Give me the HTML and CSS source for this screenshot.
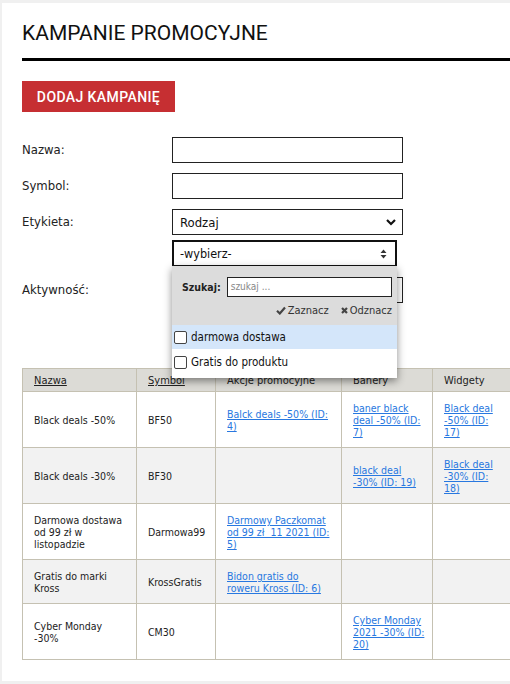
FILE: index.html
```html
<!DOCTYPE html>
<html lang="pl">
<head>
<meta charset="utf-8">
<title>Kampanie promocyjne</title>
<link rel="stylesheet" href="styles.css">
</head>
<body>
<div class="card">
  <h1 class="title">KAMPANIE PROMOCYJNE</h1>
  <div class="rule"></div>
  <button class="btn-add" type="button">DODAJ KAMPANIĘ</button>

  <form class="form">
    <div class="row">
      <label class="lbl">Nazwa:</label>
      <div class="input"></div>
    </div>
    <div class="row">
      <label class="lbl">Symbol:</label>
      <div class="input"></div>
    </div>
    <div class="row">
      <label class="lbl">Etykieta:</label>
      <div class="field-stack">
        <div class="select">
          <span>Rodzaj</span>
          <svg class="chev" width="10" height="8" viewBox="0 0 10 8"><path d="M1 2 L5 6 L9 2" fill="none" stroke="#111" stroke-width="2.2"/></svg>
        </div>
        <div class="ms-wrap">
          <div class="select select-ms">
            <span>-wybierz-</span>
            <svg class="updown" width="7" height="10" viewBox="0 0 7 10"><path d="M3.5 0.5 L6.5 4 H0.5 Z M3.5 9.5 L6.5 6 H0.5 Z" fill="#333"/></svg>
          </div>
          <div class="ms-panel">
            <div class="ms-head">
              <div class="ms-search">
                <span class="ms-slabel">Szukaj:</span>
                <div class="ms-input">szukaj ...</div>
              </div>
              <div class="ms-actions">
                <span class="ms-act"><svg width="10" height="9" viewBox="0 0 10 9"><path d="M1 4.8 L3.8 7.5 L9 1.5" fill="none" stroke="#444" stroke-width="2.2"/></svg>Zaznacz</span>
                <span class="ms-act"><svg width="7" height="7" viewBox="0 0 7 7"><path d="M1 1 L6 6 M6 1 L1 6" fill="none" stroke="#444" stroke-width="2.2"/></svg>Odznacz</span>
              </div>
            </div>
            <div class="ms-opt ms-opt-hover"><span class="cb"></span>darmowa dostawa</div>
            <div class="ms-opt ms-opt-2"><span class="cb"></span>Gratis do produktu</div>
          </div>
        </div>
      </div>
    </div>
    <div class="row row-akt">
      <label class="lbl">Aktywność:</label>
      <div class="select">
        <span></span>
        <svg class="chev" width="10" height="8" viewBox="0 0 10 8"><path d="M1 2 L5 6 L9 2" fill="none" stroke="#111" stroke-width="2.2"/></svg>
      </div>
    </div>
  </form>

  <table class="grid">
    <colgroup>
      <col class="c1"><col class="c2"><col class="c3"><col class="c4"><col class="c5">
    </colgroup>
    <thead>
      <tr>
        <th><a class="sort">Nazwa</a></th>
        <th><a class="sort">Symbol</a></th>
        <th>Akcje promocyjne</th>
        <th>Banery</th>
        <th>Widgety</th>
      </tr>
    </thead>
    <tbody>
      <tr>
        <td>Black deals -50%</td>
        <td>BF50</td>
        <td><a href="#">Balck deals -50% (ID:<br>4)</a></td>
        <td><a href="#">baner black<br>deal -50% (ID:<br>7)</a></td>
        <td><a href="#">Black deal<br>-50% (ID:<br>17)</a></td>
      </tr>
      <tr class="alt">
        <td>Black deals -30%</td>
        <td>BF30</td>
        <td></td>
        <td><a href="#">black deal<br>-30% (ID: 19)</a></td>
        <td><a href="#">Black deal<br>-30% (ID:<br>18)</a></td>
      </tr>
      <tr>
        <td>Darmowa dostawa<br>od 99 zł w<br>listopadzie</td>
        <td>Darmowa99</td>
        <td><a href="#">Darmowy Paczkomat<br>od 99 zł&nbsp; 11 2021 (ID:<br>5)</a></td>
        <td></td>
        <td></td>
      </tr>
      <tr class="alt">
        <td>Gratis do marki<br>Kross</td>
        <td>KrossGratis</td>
        <td><a href="#">Bidon gratis do<br>roweru Kross (ID: 6)</a></td>
        <td></td>
        <td></td>
      </tr>
      <tr>
        <td>Cyber Monday<br>-30%</td>
        <td>CM30</td>
        <td></td>
        <td><a href="#">Cyber Monday<br>2021 -30% (ID:<br>20)</a></td>
        <td></td>
      </tr>
    </tbody>
  </table>
</div>
</body>
</html>
```

FILE: styles.css
```css
html, body {
  margin: 0;
  padding: 0;
  background: #f0f0f0;
  overflow: hidden;
}
body {
  font-family: "DejaVu Sans Condensed", "DejaVu Sans", sans-serif;
  color: #222;
}
.card {
  background: #fff;
  margin: 3px 0 0 2px;
  width: 530px;
  height: 678px;
  padding: 0 0 0 20px;
  box-sizing: border-box;
}
.title {
  margin: 0;
  padding-top: 17px;
  font-family: Roboto, "Liberation Sans", sans-serif;
  font-weight: 400;
  font-size: 21px;
  line-height: 26px;
  color: #111;
}
.rule {
  height: 3px;
  background: #000;
  margin-top: 12px;
}
.btn-add {
  display: block;
  margin-top: 20px;
  width: 153px;
  height: 31px;
  border: 0;
  background: #c62f32;
  color: #fff;
  font-family: Roboto, "Liberation Sans", sans-serif;
  font-size: 14px;
  font-weight: 500;
  letter-spacing: 0.4px;
  padding: 0;
}
.form {
  margin-top: 25px;
  display: flex;
  flex-direction: column;
  gap: 10px;
}
.row {
  display: flex;
  align-items: flex-start;
}
.lbl {
  width: 150px;
  font-size: 13px;
  line-height: 26px;
  color: #222;
}
.input, .select {
  width: 231px;
  height: 26px;
  box-sizing: border-box;
  border: 1px solid #222;
  background: #fff;
}
.field-stack {
  display: flex;
  flex-direction: column;
  gap: 5px;
}
.select {
  display: flex;
  align-items: center;
  justify-content: space-between;
  padding: 0 6px 0 7px;
  font-size: 13px;
  color: #111;
}
.ms-wrap {
  position: relative;
}
.select-ms {
  width: 225px;
  border: 2px solid #111;
  border-bottom-width: 1px;
  padding: 0 8px 0 6px;
  font-size: 12.5px;
}
.ms-panel {
  position: absolute;
  left: 0;
  top: 26px;
  width: 225px;
  z-index: 5;
  background: #fff;
  box-shadow: 0 3px 8px rgba(0, 0, 0, 0.45);
}
.ms-head {
  background: #dcdcdc;
  padding: 11px 5px 0 10px;
  height: 59px;
  box-sizing: border-box;
}
.ms-search {
  display: flex;
  align-items: center;
  gap: 6px;
}
.ms-slabel {
  font-size: 10.5px;
  font-weight: 700;
  color: #222;
}
.ms-input {
  width: 168px;
  height: 20px;
  box-sizing: border-box;
  border: 1px solid #222;
  background: #fff;
  font-size: 10px;
  color: #888;
  line-height: 18px;
  padding-left: 3px;
}
.ms-actions {
  display: flex;
  justify-content: flex-end;
  gap: 12px;
  margin-top: 7px;
  font-size: 11px;
  color: #333;
}
.ms-act {
  display: flex;
  align-items: center;
  gap: 2px;
}
.ms-opt {
  display: flex;
  align-items: center;
  gap: 4px;
  height: 24px;
  padding-left: 2px;
  font-size: 11.5px;
  color: #111;
}
.ms-opt-2 {
  height: 29px;
  padding-bottom: 3px;
  box-sizing: border-box;
}
.ms-opt-hover {
  background: #d4e6fa;
}
.cb {
  width: 11px;
  height: 11px;
  border: 1px solid #444;
  border-radius: 2px;
  background: #fff;
}
.row-akt {
  margin-top: 1px;
}
.grid {
  margin-top: 65px;
  border-collapse: collapse;
  table-layout: fixed;
  width: 510px;
  font-size: 10.5px;
  line-height: 12px;
}
.c1 { width: 114px; }
.c2 { width: 79px; }
.c3 { width: 126px; }
.c4 { width: 91px; }
.c5 { width: 100px; }
.grid th, .grid td {
  border: 1px solid #c5c1b2;
  text-align: left;
  vertical-align: middle;
  white-space: nowrap;
  padding: 10px 6px 9px 11px;
}
.grid th {
  background: #dcdbd6;
  font-weight: 400;
  font-size: 11px;
  color: #222;
  padding-top: 6px;
  padding-bottom: 4px;
}
.grid tr.alt td {
  background: #f2f2f2;
}
.sort {
  text-decoration: underline;
  color: #222;
}
.grid a[href] {
  color: #2878e0;
  text-decoration: underline;
}
```
